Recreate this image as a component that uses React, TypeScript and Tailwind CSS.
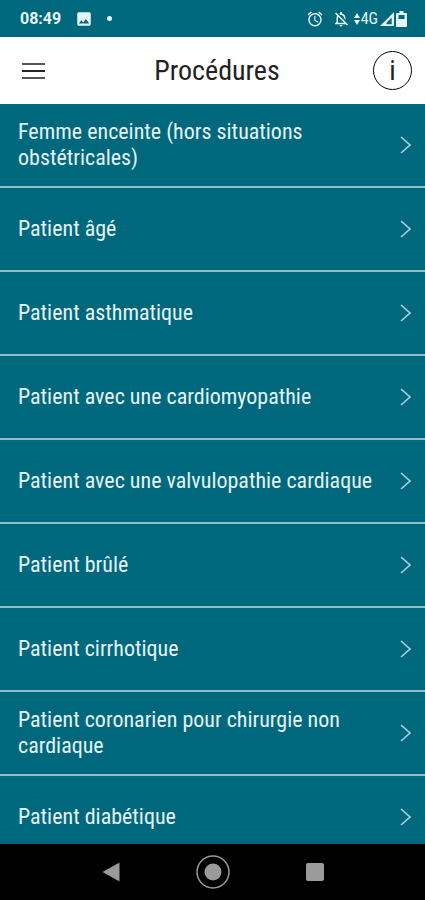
import { MdAccessAlarm, MdImage, MdOutlineNotificationsOff } from 'react-icons/md';

const procedures = [
    'Femme enceinte (hors situations obstétricales)',
    'Patient âgé',
    'Patient asthmatique',
    'Patient avec une cardiomyopathie',
    'Patient avec une valvulopathie cardiaque',
    'Patient brûlé',
    'Patient cirrhotique',
    'Patient coronarien pour chirurgie non cardiaque',
    'Patient diabétique',
];

function StatusBar() {
    return (
        <div className="flex h-[37px] shrink-0 items-center justify-between pr-[18px] pl-5 text-[#e6f5f7]">
            <div className="flex items-center gap-3.5">
                <span className="font-['Roboto',sans-serif] text-base font-bold">08:49</span>
                <MdImage className="size-[18px]" />
                <span className="size-[5px] rounded-full bg-[#e6f5f7]" />
            </div>
            <div className="flex items-center">
                <MdAccessAlarm className="mr-2 size-[18px]" />
                <MdOutlineNotificationsOff className="mr-1 size-[18px]" />
                <svg className="h-3 w-1.5" viewBox="0 0 6 12" fill="currentColor">
                    <path d="M3 0l3 5H0zM3 12l3-5H0z" />
                </svg>
                <span className="ml-px text-base">4G</span>
                <svg className="mx-0.5 size-3.5" viewBox="0 0 15 15" fill="currentColor">
                    <path fillRule="evenodd" d="M15 0v15H0zM12.500 6L7 11.500v1.500h5.500z" />
                </svg>
                <svg className="h-4 w-[11px]" viewBox="0 0 11 16" fill="currentColor">
                    <path
                        fillRule="evenodd"
                        d="M3.500 0h4v2H10a1 1 0 0 1 1 1v12a1 1 0 0 1-1 1H1a1 1 0 0 1-1-1V3a1 1 0 0 1 1-1h2.500zM2.500 4v4h6V4z"
                    />
                </svg>
            </div>
        </div>
    );
}

function Header() {
    return (
        <header className="flex h-[67px] shrink-0 items-center justify-between bg-white pr-[13px] pl-[22px] text-[#222]">
            <button type="button" aria-label="Menu" className="flex w-[39px] flex-col gap-[5px]">
                <span className="h-0.5 w-[23px] bg-[#555]" />
                <span className="h-0.5 w-[23px] bg-[#222]" />
                <span className="h-0.5 w-[23px] bg-[#555]" />
            </button>
            <h1 className="text-[28px]">Procédures</h1>
            <button
                type="button"
                aria-label="Informations"
                className="flex size-[39px] items-center justify-center rounded-full border border-black text-[28px]"
            >
                i
            </button>
        </header>
    );
}

function NavigationBar() {
    return (
        <nav className="flex h-14 shrink-0 items-center justify-center gap-[76px] bg-black text-[#9b9b9b]">
            <button type="button" aria-label="Retour">
                <svg className="h-5 w-[18px]" viewBox="0 0 18 20" fill="currentColor">
                    <path d="M17.500 0.500v19L0.500 10z" />
                </svg>
            </button>
            <button type="button" aria-label="Accueil">
                <svg className="size-[34px]" viewBox="0 0 34 34" fill="none">
                    <circle cx="17" cy="17" r="16" stroke="currentColor" strokeWidth="1.500" />
                    <circle cx="17" cy="17" r="8.500" fill="currentColor" />
                </svg>
            </button>
            <button type="button" aria-label="Applications" className="size-[18px] rounded-xs bg-[#9b9b9b]" />
        </nav>
    );
}

export default function App() {
    return (
        <div className="flex h-screen flex-col bg-[#00687d] font-['Roboto_Condensed',Roboto,sans-serif]">
            <StatusBar />
            <Header />
            <main className="min-h-0 flex-1 overflow-y-auto [scrollbar-width:none]">
                <ul>
                    {procedures.map((procedure) => (
                        <li key={procedure} className="border-b-2 border-[#93bfca]">
                            <a
                                href="#"
                                className="flex min-h-[82px] items-center justify-between gap-4 pr-3.5 pl-[18px] text-[22px] leading-[26px] text-[#e4f3f6]"
                            >
                                <span>{procedure}</span>
                                <svg className="h-[18px] w-[11px] shrink-0" viewBox="0 0 11 18" fill="none">
                                    <path d="M1 1l9 8-9 8" stroke="#a5d3e2" strokeWidth="1.600" />
                                </svg>
                            </a>
                        </li>
                    ))}
                </ul>
            </main>
            <NavigationBar />
        </div>
    );
}
